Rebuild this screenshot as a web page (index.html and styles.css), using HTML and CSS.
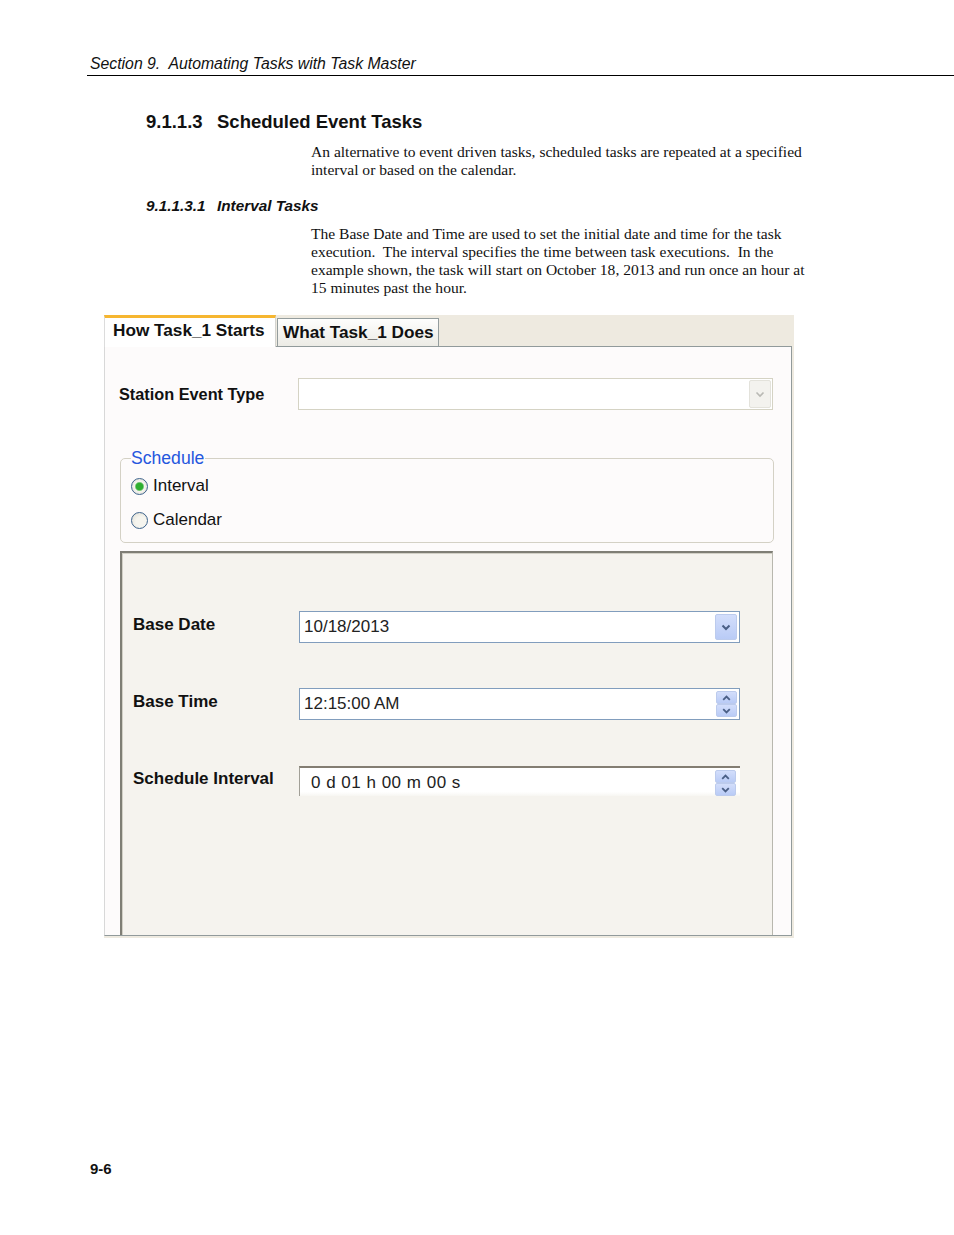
FILE: index.html
```
<!DOCTYPE html>
<html lang="en">
<head>
<meta charset="utf-8">
<title>Section 9. Automating Tasks with Task Master</title>
<link rel="stylesheet" href="styles.css">
</head>
<body>
<div class="page">
  <div class="running-head">Section 9.  Automating Tasks with Task Master</div>

  <h2 class="sec-title"><span class="num">9.1.1.3</span><span>Scheduled Event Tasks</span></h2>
  <p class="body-text">An alternative to event driven tasks, scheduled tasks are repeated at a specified<br>interval or based on the calendar.</p>

  <h3 class="subsec-title"><span class="num">9.1.1.3.1</span><span>Interval Tasks</span></h3>
  <p class="body-text">The Base Date and Time are used to set the initial date and time for the task<br>execution.&nbsp; The interval specifies the time between task executions.&nbsp; In the<br>example shown, the task will start on October 18, 2013 and run once an hour at<br>15 minutes past the hour.</p>

  <div class="shot">
    <div class="tabs">
      <div class="tab tab-active">How Task_1 Starts</div>
      <div class="tab tab-inactive">What Task_1 Does</div>
    </div>
    <div class="panel">
      <div class="row-station">
        <span class="ui-label label-station">Station Event Type</span>
        <div class="combo-disabled">
          <span class="btn-gray">
            <svg width="10" height="7" viewBox="0 0 10 7"><path d="M1.5 1.5 L5 5 L8.5 1.5" fill="none" stroke="#b9b9b4" stroke-width="1.6"/></svg>
          </span>
        </div>
      </div>

      <fieldset class="group">
        <legend>Schedule</legend>
        <label class="radio"><span class="radio-dot checked"></span>Interval</label>
        <label class="radio radio-second"><span class="radio-dot"></span>Calendar</label>
      </fieldset>

      <div class="subpanel">
        <div class="field-row">
          <span class="ui-label field-label">Base Date</span>
          <div class="field">
            <span class="field-value">10/18/2013</span>
            <span class="btn-blue btn-drop">
              <svg width="10" height="7" viewBox="0 0 10 7"><path d="M1.5 1.5 L5 5 L8.5 1.5" fill="none" stroke="#4a5f86" stroke-width="2"/></svg>
            </span>
          </div>
        </div>
        <div class="field-row">
          <span class="ui-label field-label">Base Time</span>
          <div class="field">
            <span class="field-value">12:15:00 AM</span>
            <span class="spinner">
              <span class="btn-blue spin-half"><svg width="9" height="6" viewBox="0 0 9 6"><path d="M1.2 4.8 L4.5 1.5 L7.8 4.8" fill="none" stroke="#4a5f86" stroke-width="1.8"/></svg></span>
              <span class="btn-blue spin-half"><svg width="9" height="6" viewBox="0 0 9 6"><path d="M1.2 1.2 L4.5 4.5 L7.8 1.2" fill="none" stroke="#4a5f86" stroke-width="1.8"/></svg></span>
            </span>
          </div>
        </div>
        <div class="field-row">
          <span class="ui-label field-label">Schedule Interval</span>
          <div class="field field-sunken">
            <span class="field-value value-spaced">0 d 01 h 00 m 00 s</span>
            <span class="spinner">
              <span class="btn-blue spin-half"><svg width="9" height="6" viewBox="0 0 9 6"><path d="M1.2 4.8 L4.5 1.5 L7.8 4.8" fill="none" stroke="#4a5f86" stroke-width="1.8"/></svg></span>
              <span class="btn-blue spin-half"><svg width="9" height="6" viewBox="0 0 9 6"><path d="M1.2 1.2 L4.5 4.5 L7.8 1.2" fill="none" stroke="#4a5f86" stroke-width="1.8"/></svg></span>
            </span>
          </div>
        </div>
      </div>
    </div>
  </div>

  <div class="folio">9-6</div>
</div>
</body>
</html>
```
FILE: styles.css
```
* { box-sizing: border-box; }

body {
  margin: 0;
  background: #ffffff;
  color: #000;
}

.page {
  width: 954px;
  padding-bottom: 40px;
}

.running-head {
  margin-left: 87px;
  padding: 55px 0 2px 3px;
  font: italic 15.8px/18px "Liberation Sans", Arial, sans-serif;
  white-space: pre;
  border-bottom: 1px solid #000;
  color: #111;
}

.sec-title {
  display: flex;
  margin: 35px 0 0 146px;
  font: bold 18.5px/22px "Liberation Sans", Arial, sans-serif;
  color: #111;
}

.sec-title .num,
.subsec-title .num {
  width: 71px;
}

.subsec-title {
  display: flex;
  margin: 18px 0 0 146px;
  font: italic bold 15.3px/18px "Liberation Sans", Arial, sans-serif;
  color: #111;
}

.body-text {
  margin: 10px 0 0 311px;
  font: 15.55px/18px "Liberation Serif", "Times New Roman", serif;
  white-space: nowrap;
  color: #111;
}

/* ---------- screenshot ---------- */

.shot {
  margin: 18px 0 0 104px;
  width: 690px;
  padding: 0 2px 2px 0;
  background: #eeeae0;
  font-family: "Liberation Sans", Arial, sans-serif;
  color: #111;
}

.tabs {
  display: flex;
  align-items: flex-end;
  gap: 1px;
  height: 31px;
}

.tab {
  font-weight: bold;
  font-size: 17.2px;
  white-space: nowrap;
}

.tab-active {
  position: relative;
  z-index: 1;
  width: 172px;
  height: 32px;
  margin-bottom: -1px;
  padding-left: 8px;
  line-height: 24px;
  background: #ffffff;
  border-top: 3px solid #f6b630;
  border-left: 1px solid #dcdcdc;
  border-right: 1px solid #d4d4d0;
}

.tab-inactive {
  width: 162px;
  height: 28px;
  padding-left: 5px;
  line-height: 26px;
  background: linear-gradient(#fefefd, #ecebe5);
  border: 1px solid #949d9e;
  border-bottom: 0;
}

.panel {
  display: flex;
  flex-direction: column;
  width: 688px;
  height: 590px;
  padding: 0 16px 0 15px;
  background: #fdfbfb;
  border: 1px solid #919a9b;
  border-left-color: #d8d8d8;
}

.ui-label {
  font-weight: bold;
  font-size: 17px;
  line-height: 20px;
  white-space: nowrap;
  color: #111;
}

.row-station {
  display: flex;
  align-items: center;
  height: 32px;
  margin-top: 31px;
}

.label-station {
  width: 179px;
  margin-left: -1px;
  font-size: 16.3px;
}

.combo-disabled {
  display: flex;
  justify-content: flex-end;
  align-items: center;
  width: 475px;
  height: 32px;
  padding-right: 1px;
  background: #fff;
  border: 1px solid #d5d3c4;
}

.btn-gray {
  display: flex;
  align-items: center;
  justify-content: center;
  width: 22px;
  height: 28px;
  background: #f3f2ee;
  border: 1px solid #e3e2db;
  border-radius: 2px;
}

.group {
  margin: 38px 1px 0 0;
  padding: 6px 10px 10px 10px;
  border: 1px solid #d4d1c5;
  border-radius: 5px;
  min-width: 0;
}

.group legend {
  padding: 0 1px 0 0;
  font-size: 17.6px;
  line-height: 20px;
  color: #2557de;
}

.radio {
  display: flex;
  align-items: center;
  height: 24px;
  font-size: 17px;
  color: #111;
}

.radio-second {
  margin-top: 10px;
}

.radio-dot {
  width: 17px;
  height: 17px;
  margin-right: 5px;
  border-radius: 50%;
  border: 1px solid #3d638c;
  background: radial-gradient(circle at 60% 60%, #f6f5ef 40%, #dcdad0 100%);
}

.radio-dot.checked {
  background: radial-gradient(circle, #2fae2f 0 3.4px, #8fd08f 4.2px, #f4f3ee 5px, #dcdad0 100%);
}

.subpanel {
  flex: 1;
  margin: 8px 2px 0 0;
  padding: 58px 0 0 11px;
  background: #f5f3ee;
  border-top: 2px solid #7f7e75;
  border-left: 2px solid #7f7e75;
  border-right: 1px solid #b8b7ae;
  box-shadow: inset 1px 1px 0 #d2d0c6;
}

.field-row {
  display: flex;
  align-items: center;
  height: 32px;
}

.field-row + .field-row {
  margin-top: 45px;
}

.field-label {
  width: 166px;
  padding-bottom: 5px;
}

.field {
  display: flex;
  align-items: center;
  width: 441px;
  height: 32px;
  padding: 0 2px 0 4px;
  background: #fff;
  border: 1px solid #819dbd;
}

.field-value {
  flex: 1;
  font-size: 17px;
  color: #222;
  white-space: nowrap;
}

.value-spaced {
  letter-spacing: 0.5px;
}

.field-sunken {
  height: 30px;
  padding: 2px 4px 0 11px;
  border: 0;
  border-top: 2px solid #837d72;
  border-left: 1px solid #a19f97;
  background: linear-gradient(#fff 85%, #f7f6f2);
}

.btn-blue {
  display: flex;
  align-items: center;
  justify-content: center;
  background: linear-gradient(#d3defb, #b9cbf6);
  border: 1px solid #bccbed;
  border-radius: 2px;
}

.btn-drop {
  width: 22px;
  height: 26px;
}

.spinner {
  display: flex;
  flex-direction: column;
  width: 21px;
  height: 26px;
}

.spin-half {
  flex: 1;
}

.folio {
  margin: 222px 0 0 90px;
  font: bold 15px/18px "Liberation Sans", Arial, sans-serif;
  color: #111;
}
```
